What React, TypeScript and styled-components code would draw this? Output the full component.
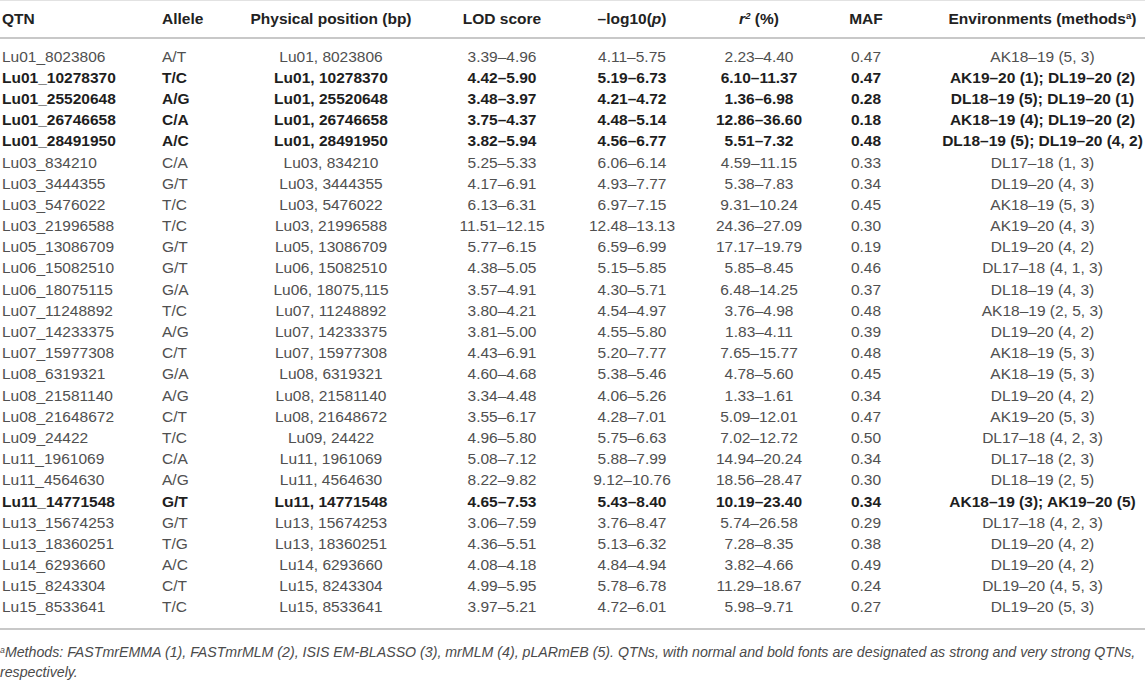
import React from "react";
import styled, { createGlobalStyle } from "styled-components";

const Global = createGlobalStyle`
  html, body { margin: 0; padding: 0; background: #fff; }
  body { font-family: "Liberation Sans", Arial, sans-serif; }
`;

const Page = styled.div`
  width: 1145px;
  display: flex;
  flex-direction: column;
`;

const Table = styled.table`
  width: 1145px;
  table-layout: fixed;
  border-collapse: collapse;
  font-size: 15.5px;
  border-top: 1px solid #e2e2e2;
  border-bottom: 2px solid #c8c8c8;
`;

const HeadRow = styled.tr`
  height: 37px;
  border-bottom: 2px solid #c8c8c8;
`;

const Th = styled.th<{ $align?: string; $pl?: number }>`
  font-weight: bold;
  color: #222;
  padding: 0 0 0 ${(p) => p.$pl ?? 0}px;
  text-align: ${(p) => p.$align ?? "center"};
  white-space: nowrap;
  vertical-align: middle;
`;

const Row = styled.tr<{ $bold?: boolean }>`
  height: 21.2px;
  font-weight: ${(p) => (p.$bold ? "bold" : "normal")};
  color: ${(p) => (p.$bold ? "#1e1e1e" : "#505050")};
`;

const Spacer = styled.tr<{ $h: number }>`
  height: ${(p) => p.$h}px;
`;

const Td = styled.td<{ $align?: string; $pl?: number }>`
  padding: 0 0 0 ${(p) => p.$pl ?? 0}px;
  text-align: ${(p) => p.$align ?? "center"};
  white-space: nowrap;
  line-height: 21px;
`;

const Sup = styled.sup`
  font-size: 0.62em;
  line-height: 0;
  vertical-align: 0.55em;
`;

const FootSup = styled.sup`
  font-size: 0.62em;
  line-height: 0;
  vertical-align: 0.5em;
`;

const Ital = styled.i``;

const Foot = styled.p`
  margin: 12px 0 0 0;
  font-size: 14.2px;
  font-style: italic;
  color: #4a4a4a;
  line-height: 20px;
`;

type R = [boolean, string, string, string, string, string, string, string, string];

const rows: R[] = [
  [false, "Lu01_8023806", "A/T", "Lu01, 8023806", "3.39–4.96", "4.11–5.75", "2.23–4.40", "0.47", "AK18–19 (5, 3)"],
  [true, "Lu01_10278370", "T/C", "Lu01, 10278370", "4.42–5.90", "5.19–6.73", "6.10–11.37", "0.47", "AK19–20 (1); DL19–20 (2)"],
  [true, "Lu01_25520648", "A/G", "Lu01, 25520648", "3.48–3.97", "4.21–4.72", "1.36–6.98", "0.28", "DL18–19 (5); DL19–20 (1)"],
  [true, "Lu01_26746658", "C/A", "Lu01, 26746658", "3.75–4.37", "4.48–5.14", "12.86–36.60", "0.18", "AK18–19 (4); DL19–20 (2)"],
  [true, "Lu01_28491950", "A/C", "Lu01, 28491950", "3.82–5.94", "4.56–6.77", "5.51–7.32", "0.48", "DL18–19 (5); DL19–20 (4, 2)"],
  [false, "Lu03_834210", "C/A", "Lu03, 834210", "5.25–5.33", "6.06–6.14", "4.59–11.15", "0.33", "DL17–18 (1, 3)"],
  [false, "Lu03_3444355", "G/T", "Lu03, 3444355", "4.17–6.91", "4.93–7.77", "5.38–7.83", "0.34", "DL19–20 (4, 3)"],
  [false, "Lu03_5476022", "T/C", "Lu03, 5476022", "6.13–6.31", "6.97–7.15", "9.31–10.24", "0.45", "AK18–19 (5, 3)"],
  [false, "Lu03_21996588", "T/C", "Lu03, 21996588", "11.51–12.15", "12.48–13.13", "24.36–27.09", "0.30", "AK19–20 (4, 3)"],
  [false, "Lu05_13086709", "G/T", "Lu05, 13086709", "5.77–6.15", "6.59–6.99", "17.17–19.79", "0.19", "DL19–20 (4, 2)"],
  [false, "Lu06_15082510", "G/T", "Lu06, 15082510", "4.38–5.05", "5.15–5.85", "5.85–8.45", "0.46", "DL17–18 (4, 1, 3)"],
  [false, "Lu06_18075115", "G/A", "Lu06, 18075,115", "3.57–4.91", "4.30–5.71", "6.48–14.25", "0.37", "DL18–19 (4, 3)"],
  [false, "Lu07_11248892", "T/C", "Lu07, 11248892", "3.80–4.21", "4.54–4.97", "3.76–4.98", "0.48", "AK18–19 (2, 5, 3)"],
  [false, "Lu07_14233375", "A/G", "Lu07, 14233375", "3.81–5.00", "4.55–5.80", "1.83–4.11", "0.39", "DL19–20 (4, 2)"],
  [false, "Lu07_15977308", "C/T", "Lu07, 15977308", "4.43–6.91", "5.20–7.77", "7.65–15.77", "0.48", "AK18–19 (5, 3)"],
  [false, "Lu08_6319321", "G/A", "Lu08, 6319321", "4.60–4.68", "5.38–5.46", "4.78–5.60", "0.45", "AK18–19 (5, 3)"],
  [false, "Lu08_21581140", "A/G", "Lu08, 21581140", "3.34–4.48", "4.06–5.26", "1.33–1.61", "0.34", "DL19–20 (4, 2)"],
  [false, "Lu08_21648672", "C/T", "Lu08, 21648672", "3.55–6.17", "4.28–7.01", "5.09–12.01", "0.47", "AK19–20 (5, 3)"],
  [false, "Lu09_24422", "T/C", "Lu09, 24422", "4.96–5.80", "5.75–6.63", "7.02–12.72", "0.50", "DL17–18 (4, 2, 3)"],
  [false, "Lu11_1961069", "C/A", "Lu11, 1961069", "5.08–7.12", "5.88–7.99", "14.94–20.24", "0.34", "DL17–18 (2, 3)"],
  [false, "Lu11_4564630", "A/G", "Lu11, 4564630", "8.22–9.82", "9.12–10.76", "18.56–28.47", "0.30", "DL18–19 (2, 5)"],
  [true, "Lu11_14771548", "G/T", "Lu11, 14771548", "4.65–7.53", "5.43–8.40", "10.19–23.40", "0.34", "AK18–19 (3); AK19–20 (5)"],
  [false, "Lu13_15674253", "G/T", "Lu13, 15674253", "3.06–7.59", "3.76–8.47", "5.74–26.58", "0.29", "DL17–18 (4, 2, 3)"],
  [false, "Lu13_18360251", "T/G", "Lu13, 18360251", "4.36–5.51", "5.13–6.32", "7.28–8.35", "0.38", "DL19–20 (4, 2)"],
  [false, "Lu14_6293660", "A/C", "Lu14, 6293660", "4.08–4.18", "4.84–4.94", "3.82–4.66", "0.49", "DL19–20 (4, 2)"],
  [false, "Lu15_8243304", "C/T", "Lu15, 8243304", "4.99–5.95", "5.78–6.78", "11.29–18.67", "0.24", "DL19–20 (4, 5, 3)"],
  [false, "Lu15_8533641", "T/C", "Lu15, 8533641", "3.97–5.21", "4.72–6.01", "5.98–9.71", "0.27", "DL19–20 (5, 3)"],
];

// column widths: 0-160, 160-230, 230-432, 432-572, 572-692, 692-826, 826-906, 906-1145
const widths = [160, 70, 202, 140, 120, 134, 80, 239];

export default function App() {
  return (
    <Page>
      <Global />
      <Table>
        <colgroup>
          {widths.map((w, i) => (
            <col key={i} style={{ width: w }} />
          ))}
        </colgroup>
        <thead>
          <HeadRow>
            <Th $align="left" $pl={2}>QTN</Th>
            <Th $align="left" $pl={2}>Allele</Th>
            <Th>Physical position (bp)</Th>
            <Th>LOD score</Th>
            <Th>
              –log10(<Ital>p</Ital>)
            </Th>
            <Th>
              <Ital>r</Ital>
              <Sup>
                <Ital>2</Ital>
              </Sup>{" "}
              (%)
            </Th>
            <Th>MAF</Th>
            <Th $pl={34}>
              Environments (methods<Sup>a</Sup>)
            </Th>
          </HeadRow>
        </thead>
        <tbody>
          <Spacer $h={8} />
          {rows.map((r, i) => (
            <Row key={i} $bold={r[0]}>
              <Td $align="left" $pl={2}>{r[1]}</Td>
              <Td $align="left" $pl={2}>{r[2]}</Td>
              <Td>{r[3]}</Td>
              <Td>{r[4]}</Td>
              <Td>{r[5]}</Td>
              <Td>{r[6]}</Td>
              <Td>{r[7]}</Td>
              <Td $pl={34}>{r[8]}</Td>
            </Row>
          ))}
          <Spacer $h={11} />
        </tbody>
      </Table>
      <Foot>
        <FootSup>a</FootSup>Methods: FASTmrEMMA (1), FASTmrMLM (2), ISIS EM-BLASSO (3), mrMLM (4), pLARmEB (5). QTNs, with normal and bold fonts are designated as strong and very strong QTNs, respectively.
      </Foot>
    </Page>
  );
}
